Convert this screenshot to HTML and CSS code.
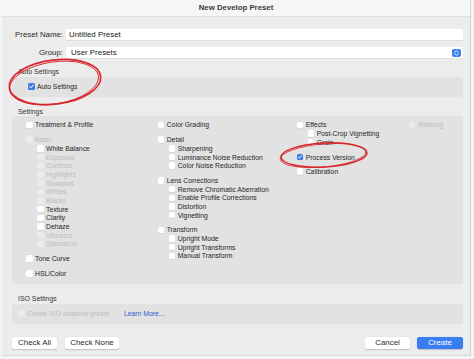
FILE: index.html
```html
<!DOCTYPE html>
<html lang="en">
<head>
<meta charset="utf-8">
<title>New Develop Preset</title>
<link rel="stylesheet" href="styles.css">
</head>
<body>
<div class="window">
  <div class="titlebar">New Develop Preset</div>
  <div class="content">
    <div class="form-row">
      <label class="form-label">Preset Name:</label>
      <div class="field">Untitled Preset</div>
    </div>
    <div class="form-row row-group">
      <label class="form-label">Group:</label>
      <div class="field select">User Presets
        <span class="stepper"><svg viewBox="0 0 9 8" width="9" height="8"><path d="M2.8 3.2 4.5 1.6 6.2 3.2M2.8 4.8 4.5 6.4 6.2 4.8" fill="none" stroke="#fff" stroke-width="0.9" stroke-linecap="round" stroke-linejoin="round"/></svg></span>
      </div>
    </div>

    <div class="section-label first">Auto Settings</div>
    <div class="box box-auto">
      <div class="check"><span class="cb on"></span>Auto Settings</div>
    </div>

    <div class="section-label">Settings</div>
    <div class="box box-settings">
      <div class="col">
        <div class="check"><span class="cb"></span>Treatment &amp; Profile</div>
        <div class="group">
          <div class="check off"><span class="cb"></span>Basic</div>
          <div class="check sub"><span class="cb"></span>White Balance</div>
          <div class="check sub off"><span class="cb"></span>Exposure</div>
          <div class="check sub off"><span class="cb"></span>Contrast</div>
          <div class="check sub off"><span class="cb"></span>Highlights</div>
          <div class="check sub off"><span class="cb"></span>Shadows</div>
          <div class="check sub off"><span class="cb"></span>Whites</div>
          <div class="check sub off"><span class="cb"></span>Blacks</div>
          <div class="check sub"><span class="cb"></span>Texture</div>
          <div class="check sub"><span class="cb"></span>Clarity</div>
          <div class="check sub"><span class="cb"></span>Dehaze</div>
          <div class="check sub off"><span class="cb"></span>Vibrance</div>
          <div class="check sub off"><span class="cb"></span>Saturation</div>
        </div>
        <div class="check"><span class="cb"></span>Tone Curve</div>
        <div class="check"><span class="cb"></span>HSL/Color</div>
      </div>
      <div class="col">
        <div class="check"><span class="cb"></span>Color Grading</div>
        <div class="group">
          <div class="check"><span class="cb"></span>Detail</div>
          <div class="check sub"><span class="cb"></span>Sharpening</div>
          <div class="check sub"><span class="cb"></span>Luminance Noise Reduction</div>
          <div class="check sub"><span class="cb"></span>Color Noise Reduction</div>
        </div>
        <div class="group">
          <div class="check"><span class="cb"></span>Lens Corrections</div>
          <div class="check sub"><span class="cb"></span>Remove Chromatic Aberration</div>
          <div class="check sub"><span class="cb"></span>Enable Profile Corrections</div>
          <div class="check sub"><span class="cb"></span>Distortion</div>
          <div class="check sub"><span class="cb"></span>Vignetting</div>
        </div>
        <div class="group">
          <div class="check"><span class="cb"></span>Transform</div>
          <div class="check sub"><span class="cb"></span>Upright Mode</div>
          <div class="check sub"><span class="cb"></span>Upright Transforms</div>
          <div class="check sub"><span class="cb"></span>Manual Transform</div>
        </div>
      </div>
      <div class="col">
        <div class="group">
          <div class="check"><span class="cb"></span>Effects</div>
          <div class="check sub"><span class="cb"></span>Post-Crop Vignetting</div>
          <div class="check sub"><span class="cb"></span>Grain</div>
        </div>
        <div class="check"><span class="cb on"></span>Process Version</div>
        <div class="check"><span class="cb"></span>Calibration</div>
      </div>
      <div class="col">
        <div class="check off"><span class="cb"></span>Masking</div>
      </div>
    </div>

    <div class="section-label">ISO Settings</div>
    <div class="box box-iso">
      <div class="check off"><span class="cb"></span>Create ISO adaptive preset</div>
      <span class="link">Learn More...</span>
    </div>

    <div class="buttons">
      <button class="btn">Check All</button>
      <button class="btn">Check None</button>
      <span class="spacer"></span>
      <button class="btn">Cancel</button>
      <button class="btn primary">Create</button>
    </div>
  </div>

  <svg class="annot annot-auto" viewBox="0 0 100 52" width="100" height="52">
    <ellipse cx="50" cy="26" rx="46" ry="22" fill="none" stroke="#d8262c" stroke-width="1.6" transform="rotate(-7 50 26)"/>
    <ellipse cx="49" cy="27" rx="45" ry="21" fill="none" stroke="#d8262c" stroke-width="0.9" transform="rotate(-9 49 27)"/>
  </svg>
  <svg class="annot annot-pv" viewBox="0 0 92 30" width="92" height="30">
    <ellipse cx="46" cy="15" rx="43" ry="12" fill="none" stroke="#d8262c" stroke-width="1.5" transform="rotate(-3 46 15)"/>
    <ellipse cx="45" cy="15.5" rx="43" ry="11.5" fill="none" stroke="#d8262c" stroke-width="0.8" transform="rotate(-5 45 15.5)"/>
  </svg>
</div>
</body>
</html>
```

FILE: styles.css
```css
* { box-sizing: border-box; }

html, body {
  margin: 0;
  padding: 0;
}

body {
  width: 474px;
  height: 359px;
  background: #f4f4f4;
  font-family: "Liberation Sans", Arial, sans-serif;
  color: #262626;
  overflow: hidden;
}

.window {
  position: relative;
  margin-left: 2px;
  width: 469px;
  height: 356px;
  background: #ececec;
  border-right: 1px solid #d2d2d2;
  border-bottom: 1px solid #d8d8d8;
}

.titlebar {
  height: 17px;
  line-height: 16px;
  background: #f6f6f6;
  border-bottom: 1px solid #dedede;
  text-align: center;
  font-weight: bold;
  font-size: 7.8px;
  color: #3a3a3a;
}

.content {
  padding: 12px 7px 0 10px;
}

.form-row {
  display: flex;
  align-items: center;
  height: 11px;
}

.row-group {
  margin-top: 7px;
}

.form-label {
  width: 51px;
  text-align: right;
  font-size: 7.85px;
  color: #2a2a2a;
  margin-right: 3px;
  flex: none;
}

.field {
  flex: 1;
  height: 11px;
  line-height: 11px;
  background: #fff;
  font-size: 7.9px;
  padding-left: 3px;
  color: #222;
  box-shadow: 0 0.5px 0 #d4d4d4;
  position: relative;
}

.select {
  padding-left: 5px;
}

.stepper {
  position: absolute;
  right: 2px;
  top: 1.5px;
  width: 9px;
  height: 8px;
  border-radius: 2px;
  background: #3c82f1;
  display: block;
}

.stepper svg { display: block; }

.section-label {
  font-size: 6.9px;
  line-height: 8px;
  height: 8px;
  margin: 11px 0 0.5px 6px;
  color: #333;
}

.section-label.first {
  margin-top: 10px;
}

.box {
  background: #e2e2e2;
  border-radius: 3px;
}

.box-auto {
  height: 20px;
  display: flex;
  align-items: center;
  padding-left: 16px;
}

.box-settings {
  height: 168px;
  display: grid;
  grid-template-columns: 131.7px 139px 112.3px auto;
  padding: 4.6px 0 0 14px;
}

.col {
  display: flex;
  flex-direction: column;
  gap: 6px;
}

.group {
  display: flex;
  flex-direction: column;
}

.check {
  display: flex;
  align-items: center;
  height: 8.7px;
  font-size: 6.8px;
  color: #262626;
  white-space: nowrap;
}

.check.sub {
  padding-left: 11px;
}

.cb {
  flex: none;
  width: 6.5px;
  height: 6.5px;
  margin-right: 2.5px;
  border-radius: 1.5px;
  background: #fff;
  box-shadow: 0 0.5px 0.5px rgba(0,0,0,0.1);
}

.cb.on {
  background: #3b7ce9 url("data:image/svg+xml;utf8,<svg xmlns='http://www.w3.org/2000/svg' viewBox='0 0 7 7'><path d='M1.6 3.6 2.9 4.9 5.4 1.9' fill='none' stroke='white' stroke-width='1' stroke-linecap='round' stroke-linejoin='round'/></svg>") center / 100% 100% no-repeat;
  box-shadow: none;
}

.check.off {
  color: #bdbdbd;
}

.check.off .cb {
  background: #ebebeb;
  box-shadow: none;
}

.box-iso {
  height: 20px;
  display: flex;
  align-items: center;
  padding-left: 6px;
}

.box-iso .check { width: 106px; }

.link {
  font-size: 6.8px;
  color: #2f5ccf;
}

.buttons {
  display: flex;
  align-items: center;
  margin-top: 13px;
}

.spacer { flex: 1; }

.btn {
  height: 12px;
  padding: 0;
  border: none;
  border-radius: 2.5px;
  background: #fff;
  font-family: "Liberation Sans", Arial, sans-serif;
  font-size: 7.9px;
  color: #2a2a2a;
  box-shadow: 0 0.5px 1px rgba(0,0,0,0.18);
  margin-right: 8px;
  width: 45px;
}

.btn:nth-child(2) { width: 54px; }
.btn:nth-child(4) { width: 45px; margin-right: 7px; }

.btn.primary {
  width: 46px;
  margin-right: 0;
  background: #3a7df3;
  color: #fff;
}

.annot {
  position: absolute;
  display: block;
  overflow: visible;
}

.annot-auto {
  left: 3px;
  top: 56px;
}

.annot-pv {
  left: 276px;
  top: 140px;
}
```
